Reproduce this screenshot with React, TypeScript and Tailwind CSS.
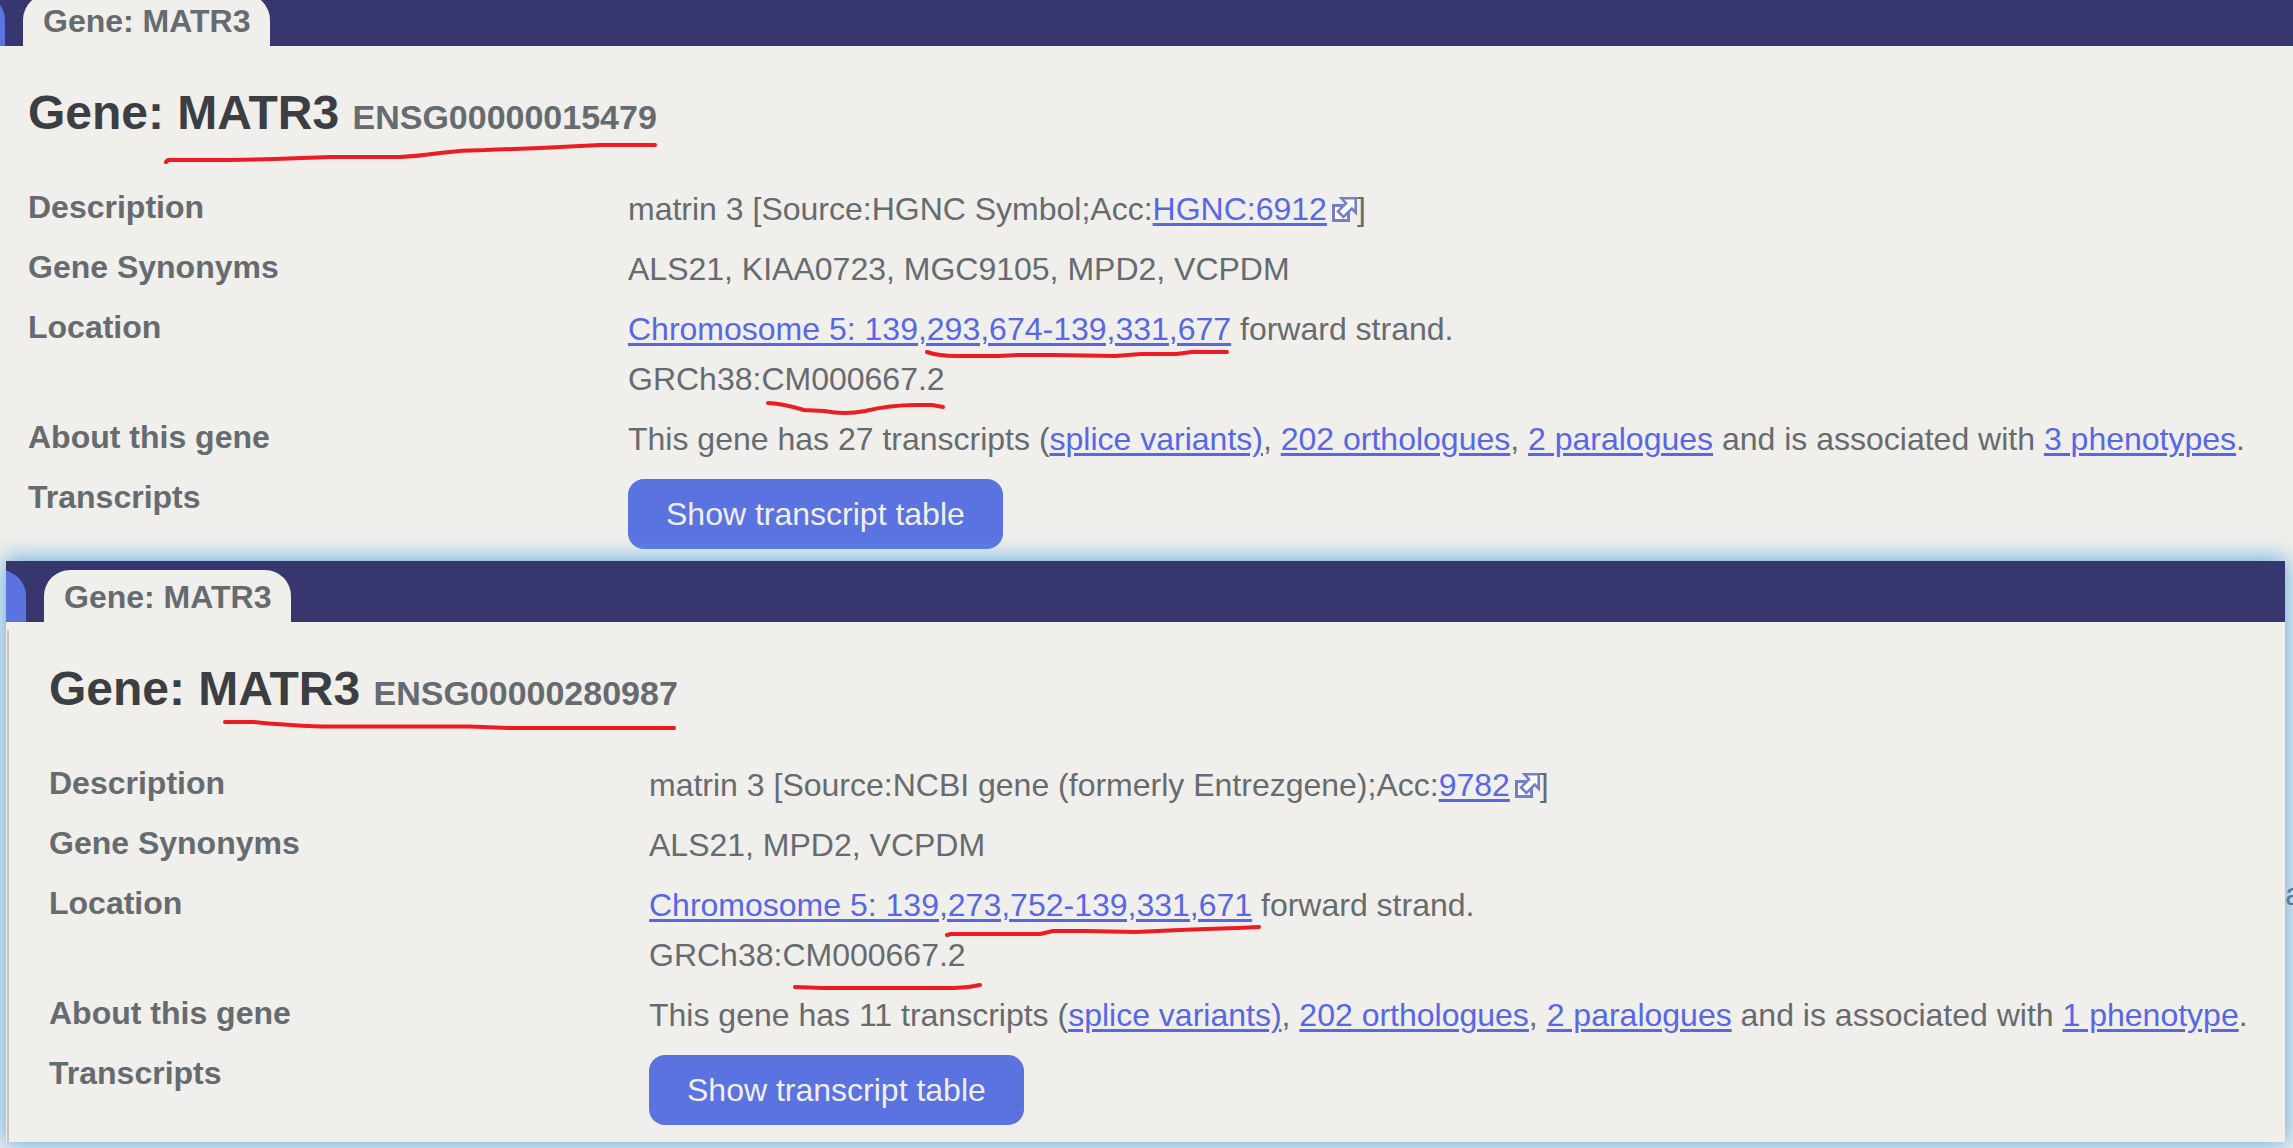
import type { ReactNode } from "react";

type Stroke = string;

function ExternalIcon() {
  return (
    <svg
      className="ml-[5px] inline-block size-[25px] align-[-2px]"
      viewBox="0 0 25 25"
      aria-hidden="true"
    >
      <path d="M1.500 8.500H16.500V23.500H1.500Z" fill="#fff" stroke="#757fc8" strokeWidth="3" />
      <path
        d="M9.500 1.300H23.700V15.500L19.800 11.600L11.500 19.900L6 14.400L14 6.200Z"
        fill="#fff"
        stroke="#757fc8"
        strokeWidth="2.600"
      />
    </svg>
  );
}

function TextLink({ children }: { children: ReactNode }) {
  return (
    <a href="#" className="text-[#5767e6] underline decoration-[3px] underline-offset-[3px]">
      {children}
    </a>
  );
}

function Row({ label, children }: { label: string; children: ReactNode }) {
  return (
    <div className="grid grid-cols-[600px_minmax(0,1fr)]">
      <dt className="leading-[46px] font-bold">{label}</dt>
      <dd className="leading-[50px] whitespace-nowrap">{children}</dd>
    </div>
  );
}

interface Gene {
  id: string;
  source: string;
  accession: string;
  synonyms: string;
  location: string;
  transcripts: number;
  phenotypes: string;
  strokes: Stroke[];
}

const genes: Gene[] = [
  {
    id: "ENSG00000015479",
    source: "HGNC Symbol",
    accession: "HGNC:6912",
    synonyms: "ALS21, KIAA0723, MGC9105, MPD2, VCPDM",
    location: "Chromosome 5: 139,293,674-139,331,677",
    transcripts: 27,
    phenotypes: "3 phenotypes",
    strokes: [
      "M166 162L168 160L230 160L275 159L330 157L400 157Q420 156 440 153Q462 150 485 150L540 148L600 145H655",
      "M927 352Q938 356 957 356H998L1018 355H1054L1115 356L1141 354H1176L1192 352H1227",
      "M768 403Q780 403 804 410L824 411Q845 415 865 411Q890 405 916 405H932L943 407",
    ],
  },
  {
    id: "ENSG00000280987",
    source: "NCBI gene (formerly Entrezgene)",
    accession: "9782",
    synonyms: "ALS21, MPD2, VCPDM",
    location: "Chromosome 5: 139,273,752-139,331,671",
    transcripts: 11,
    phenotypes: "1 phenotype",
    strokes: [
      "M219 161H248Q275 164 315 165.500H463L503 167H668",
      "M941 374L945 373H1034L1047 370H1079L1130 371L1174 369L1200 368L1232 367L1253 366",
      "M789 426L817 427H948Q961 427 974 424",
    ],
  },
];

function Strokes({ paths }: { paths: Stroke[] }) {
  return (
    <svg className="pointer-events-none absolute inset-0 size-full" aria-hidden="true">
      {paths.map((d) => (
        <path
          key={d}
          d={d}
          fill="none"
          stroke="#ed1c24"
          strokeWidth="4"
          strokeLinecap="round"
          strokeLinejoin="round"
        />
      ))}
    </svg>
  );
}

function TabBar({ inset }: { inset: boolean }) {
  return (
    <nav
      className={`flex items-end gap-[18px] overflow-hidden bg-[#38366e] ${inset ? "h-[61px]" : "h-[46px]"}`}
    >
      <div
        className={`h-[52px] w-[60px] shrink-0 rounded-t-[26px] bg-[#5a73e1] ${inset ? "-ml-10" : "-ml-[55px]"}`}
      />
      <a
        href="#"
        className="h-[52px] rounded-t-[26px] bg-[#f0efeb] px-5 leading-[54px] font-bold"
      >
        Gene: MATR3
      </a>
    </nav>
  );
}

function GeneSummary({ gene, inset }: { gene: Gene; inset: boolean }) {
  return (
    <>
      <TabBar inset={inset} />
      <div
        className={`mt-2 pt-[27px] ${inset ? "ml-px border-l-2 border-[#c8c4bc] pb-[17px] pl-10" : "pb-3 pl-7"}`}
      >
        <h1 className="text-[48px] leading-[64px] font-bold text-[#3b3e42]">
          Gene: MATR3 <span className="text-[34px] text-[#666b70]">{gene.id}</span>
        </h1>
        <dl className="mt-[35px] flex flex-col gap-2.5">
          <Row label="Description">
            matrin 3 [Source:{gene.source};Acc:<TextLink>{gene.accession}</TextLink>
            <ExternalIcon />]
          </Row>
          <Row label="Gene Synonyms">{gene.synonyms}</Row>
          <Row label="Location">
            <TextLink>{gene.location}</TextLink> forward strand.
            <br />
            GRCh38:CM000667.2
          </Row>
          <Row label="About this gene">
            This gene has {gene.transcripts} transcripts (<TextLink>splice variants)</TextLink>,{" "}
            <TextLink>202 orthologues</TextLink>, <TextLink>2 paralogues</TextLink> and is associated
            with <TextLink>{gene.phenotypes}</TextLink>.
          </Row>
          <Row label="Transcripts">
            <button
              type="button"
              className="mt-[5px] block rounded-2xl bg-[#5a73e1] px-[38px] leading-[70px] text-[#f0efeb]"
            >
              Show transcript table
            </button>
          </Row>
        </dl>
      </div>
      <Strokes paths={gene.strokes} />
    </>
  );
}

export default function App() {
  return (
    <main className="relative flex min-h-screen flex-col overflow-hidden bg-[#f0efeb] pb-1.5 font-['Liberation_Sans',Arial,sans-serif] text-[32px] text-[#666b70]">
      <section className="relative">
        <GeneSummary gene={genes[0]} inset={false} />
      </section>
      <span
        className="absolute top-[876px] left-[calc(100%-8px)] leading-9 text-[#4a5a6e]"
        aria-hidden="true"
      >
        a
      </span>
      <section className="relative mr-2 ml-1.5 bg-[#f0efeb] shadow-[0_0_22px_2px_#62ade2]">
        <GeneSummary gene={genes[1]} inset />
      </section>
    </main>
  );
}
